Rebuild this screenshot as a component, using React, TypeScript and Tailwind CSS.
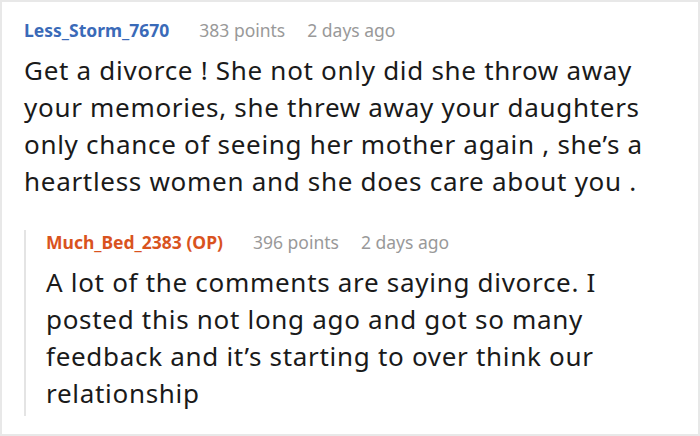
const font = { fontFamily: '"Noto Sans", "Open Sans", sans-serif' }

function Meta({ name, color, points }: { name: string; color: string; points: string }) {
  return (
    <div className="flex items-center text-[17.5px] leading-[24px]">
      <span className={`font-bold ${color}`}>{name}</span>
      <span className="ml-[30px] text-[#999999]">{points}</span>
      <span className="ml-[22px] text-[#999999]">2 days ago</span>
    </div>
  )
}

export default function App() {
  return (
    <div style={font} className="w-[700px] h-[436px] bg-white border-2 border-[#e8e8e8] overflow-hidden">
      <div className="pl-[22px] pr-[24px] pt-[16px]">
        <Meta name="Less_Storm_7670" color="text-[#3a6ab8]" points="383 points" />
        <p className="text-[26px] leading-[37px] tracking-[0.7px] text-[#1a1a1a] mt-[10px]">
          Get a divorce ! She not only did she throw away your memories, she threw away your daughters only chance of seeing her mother again , she’s a heartless women and she does care about you .
        </p>
        <div className="mt-[30px] border-l-2 border-[#e4e4e4] pl-[20px] pb-[4px]">
          <Meta name="Much_Bed_2383 (OP)" color="text-[#d9531e]" points="396 points" />
          <p className="text-[26px] leading-[37px] tracking-[0.7px] text-[#1a1a1a] mt-[10px]">
            A lot of the comments are saying divorce. I posted this not long ago and got so many feedback and it’s starting to over think our relationship
          </p>
        </div>
      </div>
    </div>
  )
}
